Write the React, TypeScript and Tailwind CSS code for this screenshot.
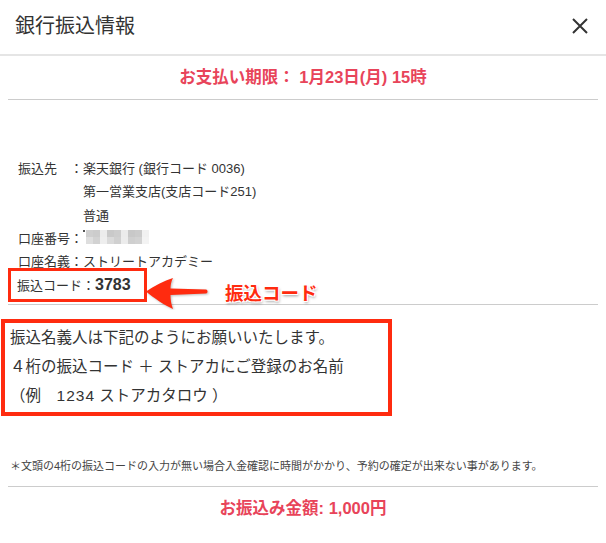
const font = { fontFamily: '"Liberation Sans", "Noto Sans CJK JP", sans-serif' };

const maskRows = [
  ["#cfcfcf", "#cccccc", "#ececec", "#c9c9c9", "#cdcdcd", "#ebebeb", "#c8c8c8", "#cbcbcb", "#f1f1f1"],
  ["#dedede", "#d2d2d2", "#eeeeee", "#dadada", "#d0d0d0", "#ececec", "#cfcfcf", "#d2d2d2", "#f3f3f3"],
];

function MaskedNumber() {
  return (
    <span className="inline-flex items-start gap-[1px] pt-[3px]">
      <span className="h-[2px] w-[2px] bg-[#555]" />
      <span className="flex flex-col">
        {maskRows.map((row, i) => (
          <span key={i} className="flex">
            {row.map((c, j) => (
              <span key={j} className="h-[7px] w-[7px]" style={{ backgroundColor: c }} />
            ))}
          </span>
        ))}
      </span>
    </span>
  );
}

function Arrow() {
  return (
    <svg width="64" height="32" viewBox="0 0 64 32" className="-ml-[1px] mt-[10px] shrink-0">
      <path
        d="M0 13.5 C8 8 18 3 27 0 C25 4 24.5 7 24.5 10.5 L60 11.5 C62 12 62 15 60 15.5 L24.5 17 C24.5 21 25 26 27 31 C18 27 8 20 0 13.5 Z"
        fill="#ff2b0f"
        style={{ filter: "drop-shadow(1px 1px 1px rgba(0,0,0,0.25))" }}
      />
    </svg>
  );
}

export default function App() {
  return (
    <div className="h-[543px] w-[606px] overflow-hidden bg-white text-[#333]" style={font}>
      <header className="flex h-[56px] items-center justify-between border-b-2 border-[#e5e5e5] pb-[2px] pl-[15px] pr-[18px]">
        <h1 className="text-[20px] leading-none">銀行振込情報</h1>
        <svg width="16" height="16" viewBox="0 0 16 16">
          <path d="M1 1 L15 15 M15 1 L1 15" stroke="#333" strokeWidth="2" />
        </svg>
      </header>

      <div className="mx-[8px]">
        <div className="flex h-[44px] items-center justify-center border-b border-[#cccccc] text-[16.5px] font-bold text-[#e8445a]">
          お支払い期限： 1月23日(月) 15時
        </div>

        <div className="pl-[10px] pt-[57px] text-[13px] leading-[23.3px]">
          <div className="flex">
            <span className="w-[65px] shrink-0">
              <span className="inline-block w-[52px]">振込先</span>：
            </span>
            <div>
              <div>楽天銀行 (銀行コード 0036)</div>
              <div>第一営業支店(支店コード251)</div>
              <div>普通</div>
            </div>
          </div>
          <div className="flex">
            <span className="w-[65px] shrink-0">口座番号：</span>
            <MaskedNumber />
          </div>
          <div className="flex">
            <span className="w-[65px] shrink-0">口座名義：</span>
            <span>ストリートアカデミー</span>
          </div>
        </div>

        <div className="-mt-[5px] flex h-[34px] items-start">
          <div className="flex h-[34px] w-[139px] items-center border-[3px] border-[#ff2b0f] pl-[6px] text-[13px]">
            振込コード：<span className="text-[16px] font-bold">3783</span>
          </div>
          <Arrow />
          <span className="ml-[15px] mt-[16px] text-[18.5px] font-bold leading-[20px] text-[#ff2b0f] [text-shadow:1px_1px_0_#fff,-1px_-1px_0_#fff,1px_-1px_0_#fff,-1px_1px_0_#fff,1px_2px_3px_rgba(0,0,0,0.4)]">
            振込コード
          </span>
        </div>

        <div className="mt-[2px] border-b border-[#cccccc]" />

        <div className="-ml-[7px] mt-[14px] h-[97px] w-[391px] border-[4px] border-[#ff2b0f] pl-[5px] text-[15.5px] leading-[29px]">
          <div>振込名義人は下記のようにお願いいたします。</div>
          <div>４桁の振込コード ＋ ストアカにご登録のお名前</div>
          <div>
            （例　<span className="tracking-[1px]">1234</span> ストアカタロウ ）
          </div>
        </div>

        <div className="mt-[42px] pl-[2px] text-[11px] leading-[16px] text-[#444]">
          ＊文頭の4桁の振込コードの入力が無い場合入金確認に時間がかかり、予約の確定が出来ない事があります。
        </div>

        <div className="mt-[12px] border-b border-[#cccccc]" />

        <div className="mt-[11px] text-center text-[16.5px] font-bold leading-[20px] text-[#e8445a]">
          お振込み金額: 1,000円
        </div>
      </div>
    </div>
  );
}
